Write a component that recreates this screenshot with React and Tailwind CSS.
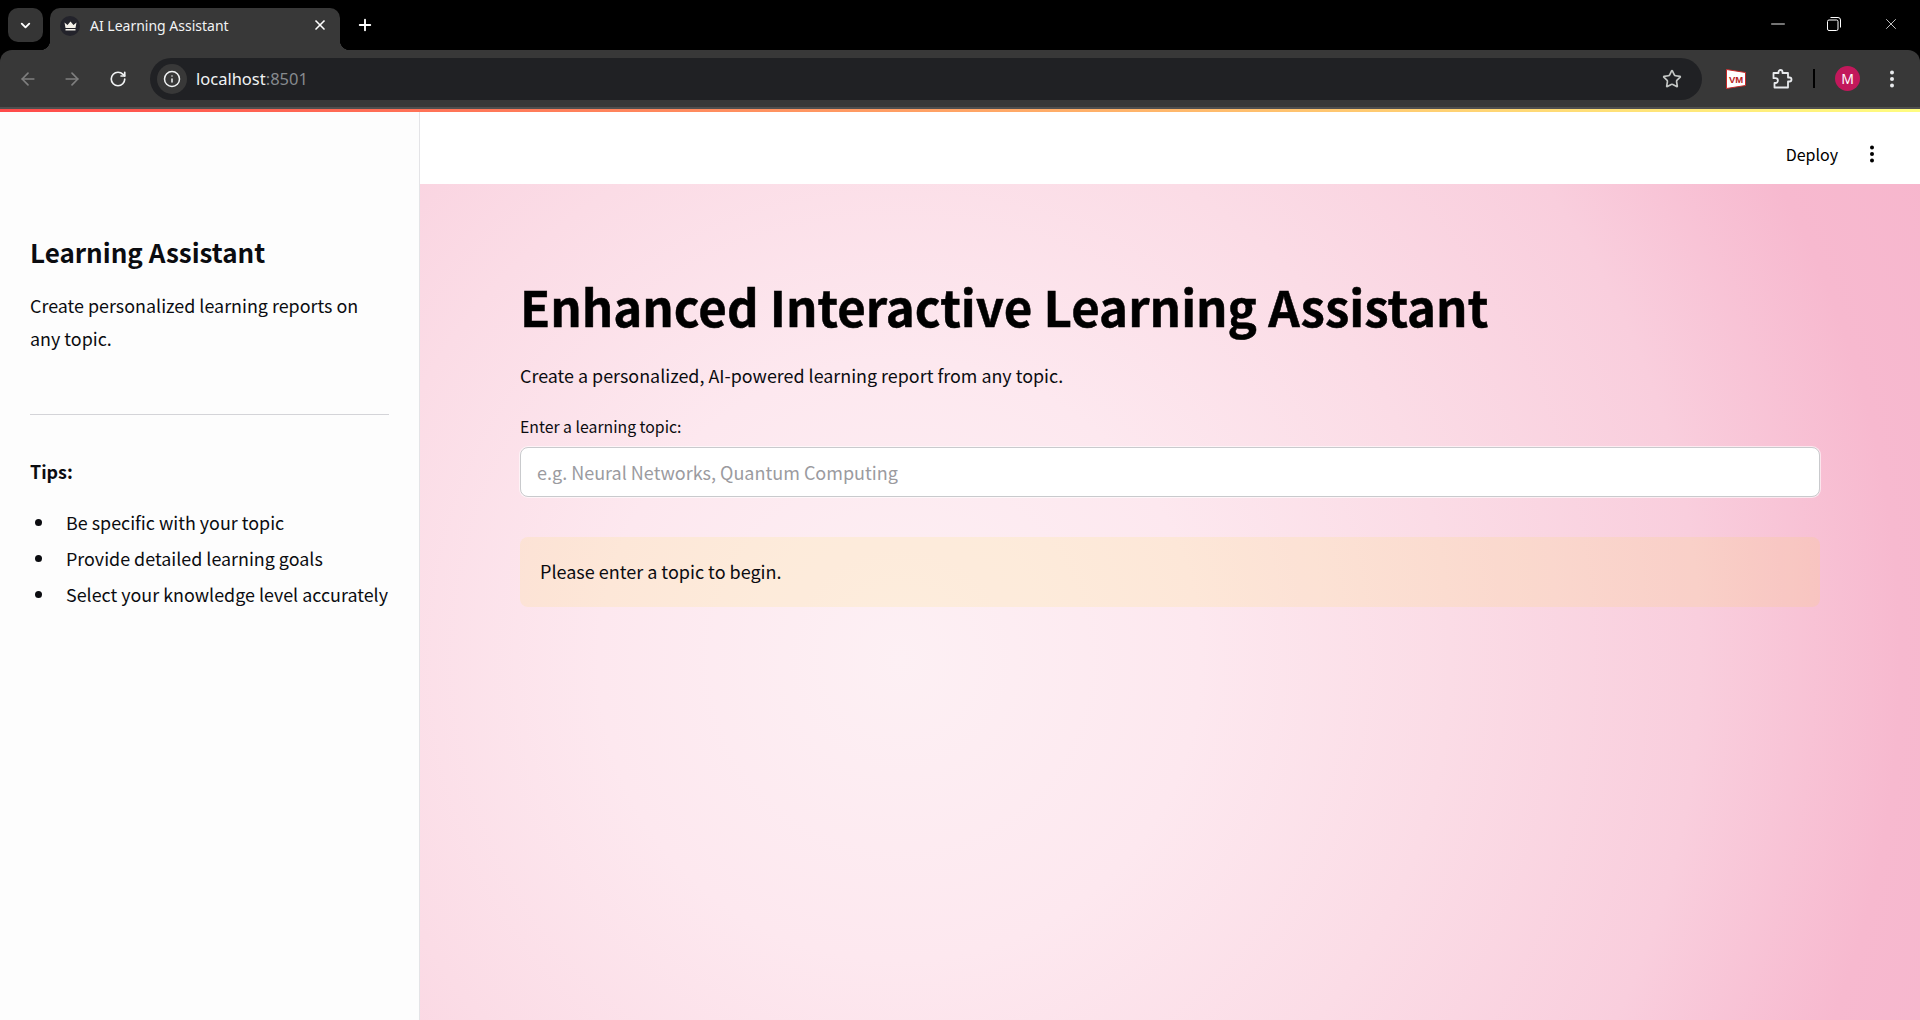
import { ArrowLeft, ArrowRight, ChevronDown, Info, Minus, Plus, RotateCw, Star, X } from "lucide-react";

const TopMenuDots = ({ className }) => (
  <svg width="4" height="18" viewBox="0 0 4 18" className={className} fill="currentColor">
    <circle cx="2" cy="2.5" r="2" />
    <circle cx="2" cy="9" r="2" />
    <circle cx="2" cy="15.5" r="2" />
  </svg>
);

const VmLogo = () => (
  <svg width="20" height="20" viewBox="0 0 20 20">
    <path d="M0.5 0.5 L19.5 3.5 V16.5 L0.5 19.5 Z" fill="#fff" stroke="#c62828" strokeWidth="1" />
    <text x="10" y="13.5" textAnchor="middle" fontSize="9.5" fontWeight="900" fontFamily="Liberation Sans, sans-serif" fill="#b71c1c">
      VM
    </text>
  </svg>
);

const PuzzleIcon = () => (
  <svg width="22" height="22" viewBox="0 0 22 22" fill="none" stroke="#e8eaed" strokeWidth="1.8" strokeLinejoin="round">
    <path d="M2.5 5 H7.5 V4 A2 2 0 0 1 11.5 4 V5 H17 V9.5 H18.5 A2 2 0 0 1 18.5 13.5 H17 V19.5 H3.5 V15 H4.5 A2.4 2.4 0 0 0 4.5 10.2 H2.5 Z" />
  </svg>
);

const RestoreIcon = () => (
  <svg width="14" height="14" viewBox="0 0 14 14" fill="none" stroke="#fff" strokeWidth="1">
    <rect x="0.5" y="3" width="10.5" height="10.5" rx="1.5" />
    <path d="M3.5 0.5 H11 A2.5 2.5 0 0 1 13.5 3 V10.5" />
  </svg>
);

const BrowserChrome = () => (
  <div className="flex h-[112px] flex-col bg-black font-['Noto_Sans',sans-serif]">
    <div className="flex h-[50px] items-start">
      <div className="ml-2 mt-2 flex h-[34px] w-[35px] items-center justify-center rounded-[10px] bg-[#353535]">
        <ChevronDown size={15} strokeWidth={3} color="#fff" />
      </div>
      <div className="relative ml-[7px] mt-2 flex h-[42px] w-[290px] items-start rounded-t-[10px] bg-[#383838] pl-[10px] pr-[12px] pt-[8px] before:absolute before:bottom-0 before:left-[-10px] before:h-[10px] before:w-[10px] before:bg-[radial-gradient(circle_at_0_0,#000_10px,#383838_10.5px)] before:content-[''] after:absolute after:bottom-0 after:right-[-10px] after:h-[10px] after:w-[10px] after:bg-[radial-gradient(circle_at_100%_0,#000_10px,#383838_10.5px)] after:content-['']">
        <div className="flex h-5 w-5 items-center justify-center rounded-full bg-[#23232b]">
          <svg width="13" height="10" viewBox="0 0 13 10" fill="#f2efe8">
            <path d="M0.5 1.5 L3.5 4 L6.5 0.5 L9.5 4 L12.5 1.5 L11.5 7 H1.5 Z M1.5 8 H11.5 V9.5 H1.5 Z" />
          </svg>
        </div>
        <span className="ml-[10px] flex-1 text-[14px] leading-[20px] text-[#f1f3f4]">AI Learning Assistant</span>
        <X size={16} strokeWidth={2.5} color="#fff" className="mt-[1px]" />
      </div>
      <Plus size={18} strokeWidth={2.5} color="#fff" className="ml-[16px] mt-4" />
      <div className="ml-auto flex h-[48px] items-center pr-[20px]">
        <Minus size={22} strokeWidth={1} color="#fff" />
        <div className="ml-[38px]"><RestoreIcon /></div>
        <X size={18} strokeWidth={1} color="#fff" className="ml-[41px]" />
      </div>
    </div>
    <div className="flex h-[57px] items-center rounded-t-[12px] bg-[#383838]">
      <ArrowLeft size={20} color="#7f7f7f" className="ml-[18px]" />
      <ArrowRight size={20} color="#7f7f7f" className="ml-[24px]" />
      <RotateCw size={18} strokeWidth={2.2} color="#f1f3f4" className="ml-[27px]" />
      <div className="ml-[23px] flex h-[42px] flex-1 items-center rounded-full bg-[#202124] pl-[7px]">
        <div className="flex h-[30px] w-[30px] items-center justify-center rounded-full bg-[#383838]">
          <Info size={18} color="#f1f3f4" />
        </div>
        <span className="ml-[9px] mt-[2px] text-[16.5px] leading-none text-[#f1f3f4]">
          localhost<span className="text-[#868a8e]">:8501</span>
        </span>
        <Star size={20} color="#c4c7c5" className="ml-auto mr-[20px]" />
      </div>
      <div className="ml-[24px]"><VmLogo /></div>
      <div className="ml-[25px]"><PuzzleIcon /></div>
      <div className="ml-[20px] h-[19px] w-[2px] bg-black" />
      <div className="ml-[20px] flex h-[25px] w-[25px] items-center justify-center rounded-full bg-[#c2185b] text-[14px] text-white">M</div>
      <TopMenuDots className="ml-[30px] mr-[26px] text-[#e8eaed]" />
    </div>
    <div className="h-[2px] bg-[#4f4f4f]" />
    <div className="h-[3px] bg-[linear-gradient(90deg,#ff4b4b,#fffd80)]" />
  </div>
);

const tips = ["Be specific with your topic", "Provide detailed learning goals", "Select your knowledge level accurately"];

const Sidebar = () => (
  <aside className="w-[420px] shrink-0 border-r border-[#e4e4e7] bg-[#fdfdfd] px-[30px] pt-[123px] text-[#0b0c10]">
    <h2 className="text-[26px] font-semibold leading-[34px]">Learning Assistant</h2>
    <p className="mt-[20px] text-[17.9px] leading-[32.5px]">Create personalized learning reports on any topic.</p>
    <hr className="mt-[60px] border-[#d4d4d8]" />
    <p className="mt-[42px] text-[17.9px] font-semibold leading-7">Tips:</p>
    <ul className="mt-[23px] flex flex-col gap-2 text-[17.9px] leading-7">
      {tips.map((tip) => (
        <li key={tip} className="flex items-center whitespace-nowrap">
          <span className="ml-[5px] h-[7px] w-[7px] shrink-0 rounded-full bg-[#0b0c10]" />
          <span className="ml-[24px]">{tip}</span>
        </li>
      ))}
    </ul>
  </aside>
);

const MainArea = () => (
  <main className="flex-1 bg-[radial-gradient(circle_at_480px_548px,#fdf0f4_0px,#fde8ef_300px,#fbdce6_550px,#f9cedd_800px,#f7b9cf_1000px,#f7b6cd_1150px)]">
    <div className="flex h-[72px] items-center justify-end bg-white pr-[46px] pt-[11px] text-black">
      <span className="text-[16px] leading-none">Deploy</span>
      <TopMenuDots className="ml-[32px]" />
    </div>
    <div className="px-[100px] pt-[90px]">
      <h1 className="text-[49.2px] font-bold leading-[64px] text-black [-webkit-text-stroke:0.5px_black]">Enhanced Interactive Learning Assistant</h1>
      <p className="mt-[21px] text-[17.9px] leading-8 text-[#0b0c10]">Create a personalized, AI-powered learning report from any topic.</p>
      <label className="mt-[24px] block text-[15.8px] leading-[24px] text-[#0b0c10]">Enter a learning topic:</label>
      <input
        placeholder="e.g. Neural Networks, Quantum Computing"
        className="mt-[8px] h-[50px] w-full rounded-[8px] border border-[#c9cacd] bg-white px-[16px] text-[18px] shadow-[0_0_0_1px_rgba(255,255,255,0.6)] outline-none placeholder:text-[#9b9b9f]"
      />
      <div className="mt-[40px] flex h-[70px] items-center rounded-[8px] bg-[rgba(255,227,18,0.1)] px-5 pb-[1px] text-[18px] text-[#0b0c10]">
        Please enter a topic to begin.
      </div>
    </div>
  </main>
);

export default function App() {
  return (
    <div className="flex h-[1020px] flex-col overflow-hidden bg-white font-['Noto_Sans_CJK_SC','Noto_Sans',sans-serif]">
      <BrowserChrome />
      <div className="flex flex-1">
        <Sidebar />
        <MainArea />
      </div>
    </div>
  );
}
